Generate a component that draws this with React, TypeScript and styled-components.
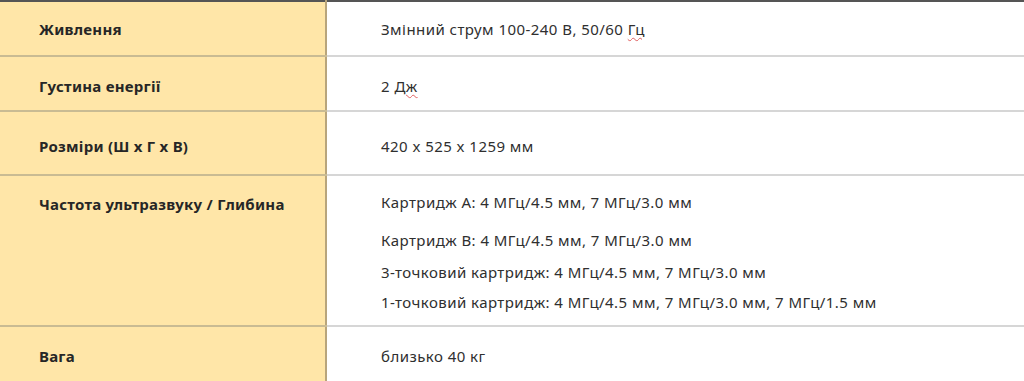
import React from 'react';
import styled, { createGlobalStyle } from 'styled-components';

const Global = createGlobalStyle`
  body {
    margin: 0;
    background: #ffffff;
    font-family: "Noto Sans", "Open Sans", sans-serif;
    color: #2e2e2e;
  }
`

const Table = styled.table`
  width: 100%;
  border-collapse: collapse;
  border-top: 2px solid #555555;
  table-layout: fixed;
`

// $nudge pushes the text a few pixels below the middle, as in the original
const Row = styled.tr<{ $h: number; $nudge?: number }>`
  height: ${p => p.$h}px;
  border-bottom: 2px solid #d6d6d6;

  & > th,
  & > td {
    padding-top: ${p => p.$nudge || 0}px;
  }
`

const Head = styled.th`
  width: 286px;
  background: #ffe6a8;
  border-right: 2px solid #b8a57c;
  border-bottom: 2px solid #c9bb93;
  padding: 0 0 0 39px;
  text-align: left;
  vertical-align: middle;
  font-size: 15px;
  letter-spacing: 0.25px;
  font-weight: 700;
  color: #262626;
`

const Cell = styled.td`
  padding: 0 0 0 54px;
  vertical-align: middle;
  font-size: 15px;
  letter-spacing: 0.45px;
  color: #2f2f2f;
`

const TopHead = styled(Head)`
  vertical-align: top;
  && { padding-top: 18px; }
`

const TopCell = styled(Cell)`
  vertical-align: top;
  && { padding-top: 16px; }
`

const Line = styled.p<{ $gap: number }>`
  margin: 0 0 ${p => p.$gap}px;
  line-height: 20px;
`

const Typo = styled.span`
  text-decoration: underline wavy #e06060;
  text-decoration-thickness: 1px;
  text-underline-offset: 2px;
`

const cartridges = [
  { text: 'Картридж A: 4 МГц/4.5 мм, 7 МГц/3.0 мм', gap: 18 },
  { text: 'Картридж B: 4 МГц/4.5 мм, 7 МГц/3.0 мм', gap: 12 },
  { text: '3-точковий картридж: 4 МГц/4.5 мм, 7 МГц/3.0 мм', gap: 10 },
  { text: '1-точковий картридж: 4 МГц/4.5 мм, 7 МГц/3.0 мм, 7 МГц/1.5 мм', gap: 0 },
]

const App: React.FC = () => {
  return (
    <React.Fragment>
      <Global />
      <Table>
        <tbody>
          <Row $h={55}>
            <Head>Живлення</Head>
            <Cell>Змінний струм 100-240 В, 50/60 <Typo>Гц</Typo></Cell>
          </Row>
          <Row $h={55} $nudge={4}>
            <Head>Густина енергії</Head>
            <Cell>2 <Typo>Дж</Typo></Cell>
          </Row>
          <Row $h={64} $nudge={6}>
            <Head>Розміри (Ш x Г x В)</Head>
            <Cell>420 x 525 x 1259 мм</Cell>
          </Row>
          <Row $h={151}>
            <TopHead>Частота ультразвуку / Глибина</TopHead>
            <TopCell>
              {cartridges.map((c, i) => (
                <Line key={i} $gap={c.gap}>{c.text}</Line>
              ))}
            </TopCell>
          </Row>
          <Row $h={56} $nudge={4}>
            <Head>Вага</Head>
            <Cell>близько 40 кг</Cell>
          </Row>
        </tbody>
      </Table>
    </React.Fragment>
  );
}

export default App;
